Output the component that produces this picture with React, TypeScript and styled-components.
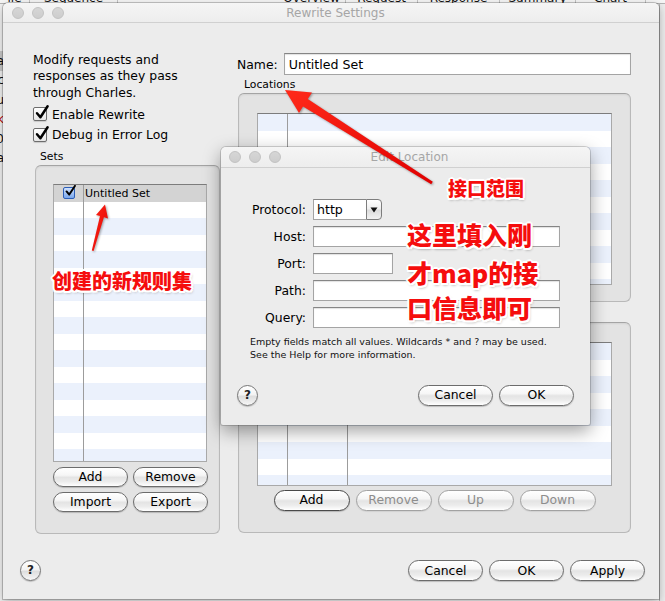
import React from "react";
import styled, { createGlobalStyle, css } from "styled-components";

const UI_FONT = `"DejaVu Sans", "Liberation Sans", sans-serif`;
const CJK_FONT = `"Noto Sans CJK SC", "Noto Sans", sans-serif`;
const ROW_H = 16.5;

const GlobalStyle = createGlobalStyle`
  html, body { margin: 0; padding: 0; }
  body {
    width: 665px; height: 601px; overflow: hidden;
    background: #f3f3f3; font-family: ${UI_FONT}; color: #000;
  }
  * { box-sizing: border-box; }
`;

const Screen = styled.div`
  position: relative;
  width: 665px;
  height: 601px;
  overflow: hidden;
  background: #f3f3f3;
`;

/* ---------- app behind the windows ---------- */
const Backdrop = styled.div`
  position: absolute;
  inset: 0;
  display: flex;
  flex-direction: column;
  font-size: 12px;
`;
const BackTabs = styled.div`
  flex: 0 0 4px;
  display: flex;
  align-items: flex-end;
  overflow: hidden;
  background: #f6f6f6;
  border-bottom: 1px solid #b4b4b4;
`;
const BackTab = styled.span<{ $w: number }>`
  flex: 0 0 ${(p) => p.$w}px;
  line-height: 11px;
  margin-bottom: -1px;
  text-align: center;
  white-space: nowrap;
  border-right: 1px solid #c4c4c4;
  color: #111;
`;
const BackMain = styled.div`
  flex: 1;
  display: flex;
  justify-content: space-between;
`;
const BackList = styled.div`
  width: 4px;
  overflow: hidden;
  padding-top: 47px;
  display: flex;
  flex-direction: column;
`;
const BackLine = styled.div<{ $sel?: boolean; $red?: boolean }>`
  height: 19.5px;
  display: flex;
  justify-content: flex-end;
  align-items: center;
  white-space: nowrap;
  background: ${(p) => (p.$sel ? "#cacaca" : "transparent")};
  color: ${(p) => (p.$red ? "#b00" : "#111")};
`;
const BackSide = styled.div`
  width: 6px;
  background: #ececec;
  border-left: 1px solid #b8b8b8;
`;

/* ---------- windows ---------- */
const MainWindow = styled.div`
  position: absolute;
  left: 3px;
  top: 3px;
  width: 656px;
  height: 596px;
  background: #ececec;
  border-radius: 5px 5px 0 0;
  box-shadow: 0 0 0 1px rgba(0, 0, 0, 0.2), 0 3px 10px rgba(0, 0, 0, 0.3);
  display: flex;
  flex-direction: column;
  overflow: hidden;
`;

const DialogWindow = styled.div`
  position: absolute;
  left: 221px;
  top: 147px;
  width: 369px;
  height: 278px;
  background: #ececec;
  border-radius: 5px 5px 2px 2px;
  box-shadow: 0 0 0 1px rgba(0, 0, 0, 0.16), 0 6px 18px rgba(0, 0, 0, 0.38);
  display: flex;
  flex-direction: column;
`;

const TitleBar = styled.div<{ $h: number; $pad: number }>`
  flex: 0 0 ${(p) => p.$h}px;
  display: grid;
  grid-template-columns: 1fr auto 1fr;
  align-items: center;
  padding-left: ${(p) => p.$pad}px;
  background: linear-gradient(#f5f5f5, #ededed);
  border-bottom: 1px solid #d0d0d0;
  border-radius: 5px 5px 0 0;
`;
const Lights = styled.div`
  display: flex;
  gap: 8px;
`;
const Light = styled.span`
  width: 12px;
  height: 12px;
  border-radius: 50%;
  background: linear-gradient(#d6d6d6, #cdcdcd);
  border: 1px solid #c2c2c2;
`;
const Title = styled.div`
  font-size: 12px;
  color: #a6a6a6;
  white-space: nowrap;
`;

const Body = styled.div`
  display: grid;
  grid-template-columns: 187px 394px;
  column-gap: 17px;
  padding: 29px 28px 0 30px;
  align-items: start;
`;
const Column = styled.div<{ $top?: number }>`
  display: flex;
  flex-direction: column;
  padding-top: ${(p) => p.$top ?? 0}px;
`;

const Intro = styled.p`
  margin: 0;
  font-size: 12.4px;
  line-height: 16.4px;
`;

const CheckRow = styled.label<{ $first?: boolean }>`
  display: flex;
  align-items: center;
  gap: 5px;
  height: 20.5px;
  margin-top: ${(p) => (p.$first ? 3 : 0)}px;
  font-size: 12.4px;
`;

const BoxMark = styled.span<{ $blue?: boolean }>`
  position: relative;
  flex: 0 0 auto;
  width: ${(p) => (p.$blue ? 12 : 14)}px;
  height: ${(p) => (p.$blue ? 12 : 14)}px;
  border-radius: 2px;
  ${(p) =>
    p.$blue
      ? css`
          border: 1px solid #2d5fb8;
          background: linear-gradient(#cfe0fb, #7aa7ec);
        `
      : css`
          border: 1px solid #6d6d6d;
          background: linear-gradient(#ffffff, #e6e6e6);
          box-shadow: 0 1px 1px rgba(0, 0, 0, 0.15);
        `}
  svg {
    position: absolute;
    left: 1px;
    top: -3px;
    overflow: visible;
  }
`;

function Check({ blue }: { blue?: boolean }) {
  const s = blue ? 11 : 14;
  return (
    <BoxMark $blue={blue}>
      <svg width={s} height={s} viewBox="0 0 14 14">
        <path
          d="M2 8.2 L5.4 12.2 L12.6 1.2"
          fill="none"
          stroke="#000"
          strokeWidth={2.5}
          strokeLinecap="round"
          strokeLinejoin="round"
        />
      </svg>
    </BoxMark>
  );
}

const GroupLabel = styled.div<{ $mt: number }>`
  font-size: 10.8px;
  line-height: 14px;
  margin: ${(p) => p.$mt}px 0 1px 7px;
`;

const GroupBox = styled.div<{ $h: number; $ml: number; $pad: string }>`
  height: ${(p) => p.$h}px;
  margin-left: ${(p) => p.$ml}px;
  padding: ${(p) => p.$pad};
  border: 1px solid #b9b9b9;
  border-top-color: #a4a4a4;
  border-radius: 6px;
  background: #e3e3e3;
  box-shadow: inset 0 1px 2px rgba(0, 0, 0, 0.07);
  display: flex;
  flex-direction: column;
`;

/* ---------- tables ---------- */
const TableFrame = styled.div<{ $h: number }>`
  height: ${(p) => p.$h}px;
  flex: 0 0 auto;
  border: 1px solid #a9a9a9;
  border-top-color: #7c7c7c;
  background: #fff;
  overflow: hidden;
  display: flex;
  flex-direction: column;
`;
const Row = styled.div<{ $tone: "blue" | "white" | "sel" }>`
  flex: 0 0 ${ROW_H}px;
  display: flex;
  background: ${(p) =>
    p.$tone === "blue" ? "#ebf1fc" : p.$tone === "sel" ? "#d3d3d3" : "#ffffff"};
`;
const Cell = styled.div<{ $w?: number }>`
  ${(p) => (p.$w ? `flex: 0 0 ${p.$w}px;` : "flex: 1;")}
  border-right: ${(p) => (p.$w ? "1px solid #9c9c9c" : "none")};
  display: flex;
  align-items: center;
  font-size: 11px;
  white-space: nowrap;
`;
const CenterCell = styled(Cell)`
  justify-content: center;
`;
const TextCell = styled(Cell)`
  padding-left: 1px;
`;

function Table({
  height,
  cols,
  startBlue,
  selected,
}: {
  height: number;
  cols: number[];
  startBlue: boolean;
  selected?: string;
}) {
  const n = Math.ceil(height / ROW_H) + 1;
  const rows = Array.from({ length: n }, (_, i) => i);
  return (
    <TableFrame $h={height}>
      {rows.map((i) => {
        const isSel = selected !== undefined && i === 0;
        const blue = startBlue ? i % 2 === 0 : i % 2 === 0 && i > 0;
        const tone = isSel ? "sel" : blue ? "blue" : "white";
        if (isSel) {
          return (
            <Row key={i} $tone={tone}>
              <CenterCell $w={cols[0]}>
                <Check blue />
              </CenterCell>
              <TextCell>{selected}</TextCell>
            </Row>
          );
        }
        return (
          <Row key={i} $tone={tone}>
            {cols.map((w, k) => (
              <Cell key={k} $w={w} />
            ))}
            <Cell />
          </Row>
        );
      })}
    </TableFrame>
  );
}

/* ---------- buttons & fields ---------- */
const PushButton = styled.button<{ $w: number; $off?: boolean; $strong?: boolean; $h?: number }>`
  width: ${(p) => p.$w}px;
  height: ${(p) => p.$h ?? 21}px;
  padding: 0;
  border-radius: 11px;
  font-family: ${UI_FONT};
  font-size: 12.4px;
  line-height: 1;
  color: ${(p) => (p.$off ? "#8d8d8d" : "#000")};
  border: 1px solid ${(p) => (p.$off ? "#a2a2a2" : p.$strong ? "#4a4a4a" : "#6c6c6c")};
  background: linear-gradient(
    #ffffff 0%,
    #f6f6f6 40%,
    #e4e4e4 52%,
    #ececec 75%,
    #ffffff 100%
  );
  box-shadow: 0 1px 1px rgba(0, 0, 0, ${(p) => (p.$off ? 0.08 : 0.2)});
`;

const HelpButton = styled.button`
  width: 21px;
  height: 21px;
  padding: 0;
  border-radius: 50%;
  border: 1px solid #777;
  background: linear-gradient(#ffffff, #f3f3f3 45%, #dedede 55%, #f7f7f7);
  box-shadow: 0 1px 1px rgba(0, 0, 0, 0.2);
  font-family: ${UI_FONT};
  font-size: 12px;
  font-weight: bold;
  color: #222;
  line-height: 19px;
`;

const ButtonGrid = styled.div`
  display: grid;
  grid-template-columns: 75px 75px;
  column-gap: 5px;
  row-gap: 5px;
  margin-top: 5px;
`;
const ButtonRow = styled.div<{ $mt?: number }>`
  display: flex;
  justify-content: center;
  gap: 6px;
  margin-top: ${(p) => p.$mt ?? 0}px;
`;

const NameRow = styled.div`
  display: flex;
  align-items: center;
  gap: 6px;
  font-size: 12.4px;
`;
const FieldLabel = styled.span`
  font-size: 12.4px;
  white-space: nowrap;
`;
const TextField = styled.div<{ $w?: number; $h?: number }>`
  ${(p) => (p.$w ? `width: ${p.$w}px;` : "flex: 1;")}
  height: ${(p) => p.$h ?? 21}px;
  background: #fff;
  border: 1px solid #a4a4a4;
  border-top-color: #858585;
  box-shadow: inset 0 1px 1px rgba(0, 0, 0, 0.12);
  display: flex;
  align-items: center;
  padding-left: 4px;
  font-size: 12.6px;
`;

const Footer = styled.div`
  display: flex;
  align-items: center;
  padding: 26px 14px 0 17px;
`;
const Spacer = styled.div`
  flex: 1;
`;

/* ---------- dialog parts ---------- */
const Form = styled.div`
  display: grid;
  grid-template-columns: 85px 247px;
  grid-auto-rows: 21px;
  column-gap: 7px;
  row-gap: 6px;
  padding-top: 31px;
  align-items: center;
`;
const FormLabel = styled(FieldLabel)`
  justify-self: end;
`;
const Select = styled.div`
  width: 69px;
  height: 21px;
  display: flex;
  font-size: 12.6px;
`;
const SelectValue = styled.div`
  flex: 1;
  background: #fff;
  border: 1px solid #a4a4a4;
  border-top-color: #858585;
  border-right: none;
  display: flex;
  align-items: center;
  padding-left: 3px;
`;
const SelectArrow = styled.div`
  flex: 0 0 16px;
  border: 1px solid #7d7d7d;
  border-radius: 0 4px 4px 0;
  background: linear-gradient(#ffffff, #f0f0f0 45%, #dcdcdc 55%, #f2f2f2);
  display: flex;
  align-items: center;
  justify-content: center;
`;
const Hint = styled.p`
  margin: 7px 0 0 29px;
  font-size: 9.5px;
  line-height: 13px;
  color: #111;
`;
const DialogFooter = styled.div`
  margin-top: auto;
  display: flex;
  align-items: center;
  gap: 6px;
  padding: 0 16px 19px 16px;
`;

/* ---------- annotations ---------- */
const ArrowLayer = styled.svg`
  position: absolute;
  left: 0;
  top: 0;
  pointer-events: none;
  overflow: visible;
  filter: drop-shadow(1px 1px 1px rgba(0, 0, 0, 0.35));
`;
const Callout = styled.div<{ $x: number; $y: number; $size: number }>`
  position: absolute;
  left: ${(p) => p.$x}px;
  top: ${(p) => p.$y}px;
  font-family: ${CJK_FONT};
  font-size: ${(p) => p.$size}px;
  font-weight: 900;
  line-height: 1;
  white-space: nowrap;
  color: #f50d0d;
  text-shadow: -2px 0 #fff, 2px 0 #fff, 0 -2px #fff, 0 2px #fff,
    -1.5px -1.5px #fff, 1.5px -1.5px #fff, -1.5px 1.5px #fff, 1.5px 1.5px #fff,
    1px 2px 3px rgba(0, 0, 0, 0.45);
`;

export default function App() {
  return (
    <Screen>
      <GlobalStyle />
      <Backdrop>
        <BackTabs>
          <BackTab $w={30}>ile</BackTab>
          <BackTab $w={88}>Sequence</BackTab>
          <BackTab $w={160}> </BackTab>
          <BackTab $w={68}>Overview</BackTab>
          <BackTab $w={72}>Request</BackTab>
          <BackTab $w={82}>Response</BackTab>
          <BackTab $w={76}>Summary</BackTab>
          <BackTab $w={70}>Chart</BackTab>
        </BackTabs>
        <BackMain>
          <BackList>
            <BackLine $sel>a</BackLine>
            <BackLine>c</BackLine>
            <BackLine>u</BackLine>
            <BackLine $red>k</BackLine>
            <BackLine>0</BackLine>
            <BackLine>a</BackLine>
          </BackList>
          <BackSide />
        </BackMain>
      </Backdrop>

      <MainWindow>
        <TitleBar $h={20} $pad={9}>
          <Lights>
            <Light />
            <Light />
            <Light />
          </Lights>
          <Title>Rewrite Settings</Title>
        </TitleBar>
        <Body>
          <Column>
            <Intro>
              Modify requests and
              <br />
              responses as they pass
              <br />
              through Charles.
            </Intro>
            <CheckRow $first>
              <Check />
              Enable Rewrite
            </CheckRow>
            <CheckRow>
              <Check />
              Debug in Error Log
            </CheckRow>
            <GroupLabel $mt={5}>Sets</GroupLabel>
            <GroupBox $h={369} $ml={2} $pad="18px 12px 0 17px">
              <Table height={278} cols={[30]} startBlue={false} selected="Untitled Set" />
              <ButtonGrid>
                <PushButton $w={75} $h={20}>Add</PushButton>
                <PushButton $w={75} $h={20}>Remove</PushButton>
                <PushButton $w={75} $h={20}>Import</PushButton>
                <PushButton $w={75} $h={20}>Export</PushButton>
              </ButtonGrid>
            </GroupBox>
          </Column>
          <Column $top={1}>
            <NameRow>
              <FieldLabel>Name:</FieldLabel>
              <TextField $h={22}>Untitled Set</TextField>
            </NameRow>
            <GroupLabel $mt={3}>Locations</GroupLabel>
            <GroupBox $h={209} $ml={1} $pad="19px 18px 0 18px">
              <Table height={172} cols={[30]} startBlue />
            </GroupBox>
            <GroupLabel $mt={5}>Rules</GroupLabel>
            <GroupBox $h={211} $ml={1} $pad="19px 18px 0 18px">
              <Table height={144} cols={[30, 60]} startBlue />
              <ButtonRow $mt={4}>
                <PushButton $w={76} $strong>
                  Add
                </PushButton>
                <PushButton $w={76} $off>
                  Remove
                </PushButton>
                <PushButton $w={76} $off>
                  Up
                </PushButton>
                <PushButton $w={76} $off>
                  Down
                </PushButton>
              </ButtonRow>
            </GroupBox>
          </Column>
        </Body>
        <Footer>
          <HelpButton>?</HelpButton>
          <Spacer />
          <ButtonRow>
            <PushButton $w={75}>Cancel</PushButton>
            <PushButton $w={75}>OK</PushButton>
            <PushButton $w={75}>Apply</PushButton>
          </ButtonRow>
        </Footer>
      </MainWindow>

      <DialogWindow>
        <TitleBar $h={21} $pad={8}>
          <Lights>
            <Light />
            <Light />
            <Light />
          </Lights>
          <Title>Edit Location</Title>
        </TitleBar>
        <Form>
          <FormLabel>Protocol:</FormLabel>
          <Select>
            <SelectValue>http</SelectValue>
            <SelectArrow>
              <svg width="8" height="6" viewBox="0 0 8 6">
                <polygon points="0.5,0.5 7.5,0.5 4,5.5" fill="#111" />
              </svg>
            </SelectArrow>
          </Select>
          <FormLabel>Host:</FormLabel>
          <TextField />
          <FormLabel>Port:</FormLabel>
          <TextField $w={80} />
          <FormLabel>Path:</FormLabel>
          <TextField />
          <FormLabel>Query:</FormLabel>
          <TextField />
        </Form>
        <Hint>
          Empty fields match all values. Wildcards * and ? may be used.
          <br />
          See the Help for more information.
        </Hint>
        <DialogFooter>
          <HelpButton>?</HelpButton>
          <Spacer />
          <PushButton $w={75}>Cancel</PushButton>
          <PushButton $w={75}>OK</PushButton>
        </DialogFooter>
      </DialogWindow>

      <ArrowLayer width="665" height="601" viewBox="0 0 665 601">
        <defs>
          <linearGradient id="redfill" x1="0" y1="0" x2="1" y2="1">
            <stop offset="0" stopColor="#ff2a1a" />
            <stop offset="1" stopColor="#e00000" />
          </linearGradient>
        </defs>
        <polygon
          points="285,90 312,92.5 307.8,98.9 432.8,181.7 431.2,184.3 303,106.5 299,113"
          fill="url(#redfill)"
        />
        <polygon
          points="105,204.5 108,218.4 103.9,217.2 93.6,251 91.8,250.6 100,216 96,215"
          fill="url(#redfill)"
        />
      </ArrowLayer>
      <Callout $x={448} $y={178} $size={19}>
        接口范围
      </Callout>
      <Callout $x={407} $y={222} $size={25}>
        这里填入刚
      </Callout>
      <Callout $x={407} $y={260} $size={25}>
        才map的接
      </Callout>
      <Callout $x={407} $y={295} $size={25}>
        口信息即可
      </Callout>
      <Callout $x={52} $y={271} $size={20}>
        创建的新规则集
      </Callout>
    </Screen>
  );
}
